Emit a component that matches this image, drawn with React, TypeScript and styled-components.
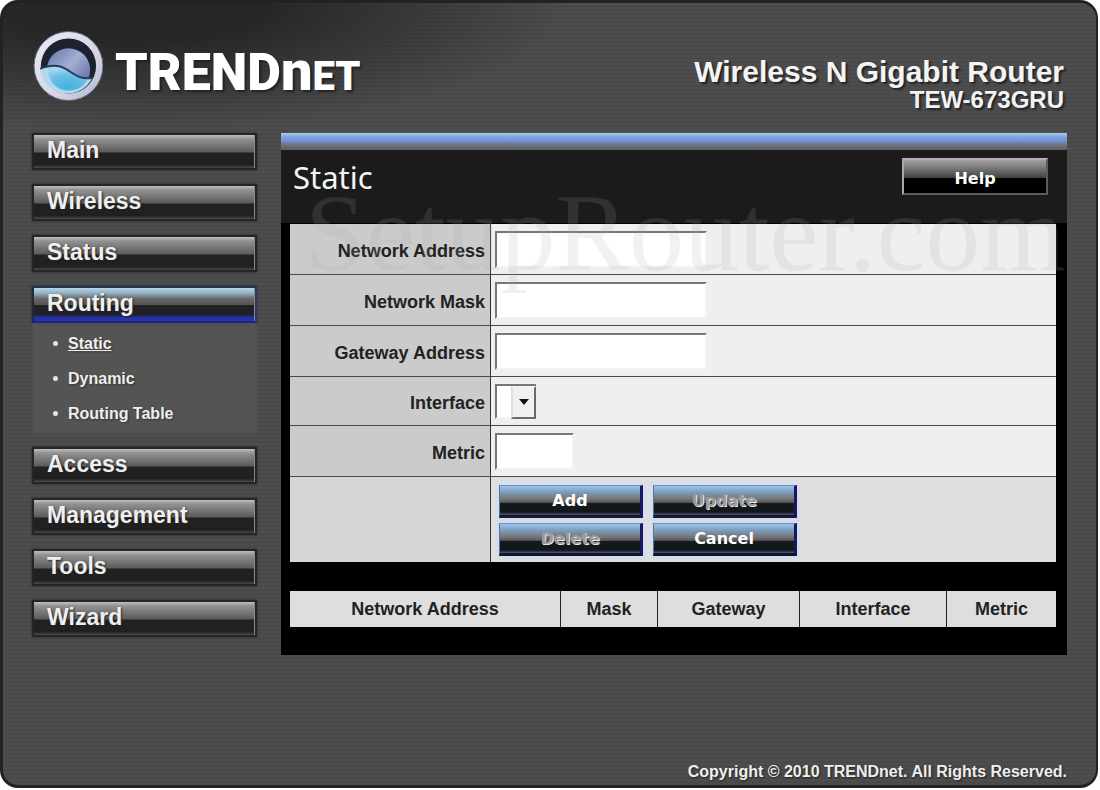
import React from "react";
import styled, { createGlobalStyle, css } from "styled-components";

const GlobalStyle = createGlobalStyle`
  *, *::before, *::after { box-sizing: border-box; }
  body {
    margin: 0;
    background: #fff;
    font-family: "Liberation Sans", Arial, sans-serif;
  }
`;

const Frame = styled.div`
  display: flex;
  flex-direction: column;
  min-height: calc(100vh - 2px);
  margin: 0 2px 2px 0;
  padding: 0 29px 0 29px;
  border: 3px solid #222;
  border-right-width: 2px;
  border-radius: 18px;
  background:
    radial-gradient(ellipse 440px 130px at 130px 0, rgba(26, 26, 26, 0.75) 30%, rgba(26, 26, 26, 0) 100%),
    repeating-linear-gradient(#4e4e4e 0 2px, #494949 2px 4px, #4c4c4c 4px 7px, #474747 7px 8px);
`;

const Header = styled.header`
  display: flex;
  justify-content: space-between;
  align-items: flex-start;
  height: 130px;
  padding-top: 27px;
`;

const Brand = styled.a`
  display: flex;
  align-items: flex-start;
  gap: 12px;
  color: #fff;
  text-decoration: none;
`;

const Wordmark = styled.span`
  padding-top: 15px;
  font: 900 52px/52px Roboto, sans-serif;
  text-shadow: 2px 2px 2px #222;
`;

const WordmarkTail = styled.span`
  font-size: 40px;
`;

const WordmarkArch = styled.span`
  font-size: 56px;
`;

const Product = styled.div`
  padding: 26px 3px 0 0;
  color: #f4f4f4;
  font-weight: bold;
  text-align: right;
  text-shadow: 2px 2px 2px #222;
`;

const ProductName = styled.h1`
  margin: 0;
  font-size: 30px;
  line-height: 32px;
`;

const Model = styled.p`
  margin: 0;
  font-size: 24px;
  line-height: 24px;
`;

const Content = styled.div`
  display: flex;
  align-items: flex-start;
  gap: 24px;
`;

const Nav = styled.nav`
  flex: 0 0 225px;
`;

const MenuList = styled.ul`
  display: flex;
  flex-direction: column;
  gap: 14px;
  margin: 0;
  padding: 0;
  list-style: none;
`;

const MenuLink = styled.a<{ $active?: boolean }>`
  display: block;
  height: 37px;
  padding-left: 13px;
  border: 2px solid #252525;
  background: linear-gradient(#c0c0c0 0, #929292 12%, #5a5a5a 52%, #222 54%, #202020 90%, #4a4a4a 100%);
  box-shadow: inset -1px 0 0 #888, 0 0 2px #222;
  color: #efefef;
  font-size: 23px;
  font-weight: bold;
  line-height: 31px;
  text-decoration: none;
  text-shadow: 1px 1px 2px #222;
  ${(p) =>
    p.$active &&
    css`
      border-color: #23344a #2b3a66 #1d2484 #252a38;
      background: linear-gradient(#b4d8ea 0, #8fa9ba 18%, #686868 32%, #555 50%, #222 52%, #202028 80%, #2730a8 90%, #2a34a0 100%);
    `}
`;

const SubList = styled.ul`
  margin: 0;
  padding: 3px 2px 2px;
  background: #545454;
  box-shadow: inset 0 0 3px #4a4a4a;
  list-style: none;
`;

const SubItem = styled.li`
  display: flex;
  align-items: center;
  gap: 10px;
  height: 35px;
  padding-left: 19px;
  color: #eee;
  font-size: 16px;
  font-weight: bold;
  text-shadow: 1px 1px 2px #333;

  &::before {
    content: "";
    width: 5px;
    height: 5px;
    border-radius: 50%;
    background: #e4e4e4;
  }
`;

const SubLink = styled.a<{ $current?: boolean }>`
  color: inherit;
  text-decoration: ${(p) => (p.$current ? "underline" : "none")};
`;

const Panel = styled.main`
  position: relative;
  flex: 1;
  min-width: 0;
  padding-bottom: 28px;
  background: #000;
`;

const PanelStripe = styled.div`
  height: 17px;
  background: linear-gradient(#a9cdea 0, #7fa0da 25%, #7694dc 45%, #6d7f9c 60%, #6a6d70 80%, #606060 100%);
`;

const PanelHeader = styled.div`
  display: flex;
  justify-content: space-between;
  align-items: flex-start;
  height: 73px;
  padding: 8px 19px 0 12px;
  background: #1b1b1b;
`;

const PanelTitle = styled.h2`
  margin: 0;
  color: #f4f4f4;
  font: 400 31px/38px "Noto Sans", sans-serif;
`;

const buttonText = css`
  color: #fff;
  font: bold 16px/20px "DejaVu Sans", Verdana, sans-serif;
  text-align: center;
`;

const HelpButton = styled.button`
  ${buttonText}
  width: 146px;
  height: 37px;
  padding: 4px 0 0;
  border: 2px solid;
  border-color: #b8adb8 #5c5c5c #5c5c5c #a9a9a9;
  background: linear-gradient(#a79ea7 0, #777 25%, #444 53%, #000 55%, #000 100%);
`;

const ActionButton = styled.button`
  ${buttonText}
  width: 144px;
  height: 33px;
  padding: 0;
  border-style: solid;
  border-width: 1px 3px 3px 1px;
  border-color: #6c93bb #1a1660 #14142c #51759c;
  background: linear-gradient(#9cc4ea 0, #7d9cba 22%, #716f70 48%, #504b4a 58%, #151a1e 60%, #12171b 90%, #4e5a76 100%);
  box-shadow: 0 0 4px 2px #cfdcf4;

  &:disabled {
    color: #9a9a9a;
    text-shadow: 1px 1px 0 #e8e8e8;
  }
`;

const FormTable = styled.table`
  width: calc(100% - 20px);
  margin: 1px 11px 29px 9px;
  border-spacing: 0;
  background: #efefef;
`;

const FormRow = styled.tr<{ $height: number }>`
  height: ${(p) => p.$height}px;
`;

const LabelCell = styled.th<{ $plain?: boolean }>`
  width: 201px;
  padding: 4px 5px 0 0;
  border-right: 1px solid #333;
  border-bottom: ${(p) => (p.$plain ? "0" : "1px solid #4a4a4a")};
  background: ${(p) => (p.$plain ? "#d6d6d6" : "#cbcbcb")};
  color: #222;
  font-size: 18px;
  line-height: 20px;
  text-align: right;
`;

const FieldCell = styled.td<{ $plain?: boolean }>`
  padding: ${(p) => (p.$plain ? "8px 8px 6px" : "0 4px")};
  border-bottom: ${(p) => (p.$plain ? "0" : "1px solid #4a4a4a")};
  background: ${(p) => (p.$plain ? "#dfdfdf" : "#efefef")};
  vertical-align: ${(p) => (p.$plain ? "top" : "middle")};
`;

const TextInput = styled.input<{ $short?: boolean }>`
  display: block;
  width: ${(p) => (p.$short ? 79 : 212)}px;
  height: 37px;
  padding: 0 6px;
  border: 2px solid;
  border-color: #777 #f2f2f2 #f2f2f2 #777;
  background: #fff;
  font: 18px "Liberation Sans", Arial, sans-serif;
`;

const SelectWrap = styled.div`
  display: grid;
  grid-template-columns: 16px 25px;
  width: 41px;
  height: 35px;

  & > * {
    grid-row: 1;
  }
`;

const Select = styled.select`
  grid-column: 1 / 3;
  border: 2px solid;
  border-color: #777 #888 #f2f2f2 #777;
  border-radius: 0;
  background: #fff;
  appearance: none;
`;

const SelectArrow = styled.span`
  grid-column: 2;
  display: flex;
  align-items: center;
  justify-content: center;
  margin-top: 2px;
  border: 2px solid;
  border-color: #f4f4f4 #6a6a6a #6a6a6a #ddd;
  background: #f1f1f1;
  pointer-events: none;
  z-index: 1;

  &::before {
    content: "";
    border: 5px solid transparent;
    border-top: 6px solid #111;
    border-bottom: 0;
  }
`;

const Actions = styled.div`
  display: grid;
  grid-template-columns: 144px 144px;
  gap: 5px 10px;
`;

const RouteTable = styled.table`
  width: calc(100% - 20px);
  margin: 0 11px 0 9px;
  border-spacing: 0;
  table-layout: fixed;
`;

const RouteHead = styled.th<{ $width?: number }>`
  width: ${(p) => (p.$width ? `${p.$width}px` : "auto")};
  height: 36px;
  padding: 0;
  border-right: 1px solid #222;
  background: #dedede;
  color: #222;
  font-size: 18px;
  line-height: 20px;

  &:last-child {
    border-right: 0;
  }
`;

const Watermark = styled.div`
  position: absolute;
  top: 40px;
  right: 0;
  left: 24px;
  color: rgba(170, 170, 170, 0.16);
  font: 110px/120px "Liberation Serif", "Times New Roman", serif;
  white-space: nowrap;
  pointer-events: none;
`;

const Footer = styled.footer`
  margin-top: auto;
  padding-bottom: 3px;
  color: #eee;
  font-size: 16px;
  font-weight: bold;
  line-height: 20px;
  text-align: right;
  text-shadow: 1px 1px 2px #222;
`;

function Logo() {
  return (
    <svg width="71" height="72" viewBox="0 0 72 72" aria-hidden="true">
      <defs>
        <linearGradient id="ring" x1="0" y1="0" x2="1" y2="1">
          <stop offset="0" stopColor="#eceaf4" />
          <stop offset="0.6" stopColor="#d6d6e6" />
          <stop offset="1" stopColor="#b0b6d0" />
        </linearGradient>
        <linearGradient id="globe" x1="0" y1="0" x2="1" y2="1">
          <stop offset="0" stopColor="#5f74a6" />
          <stop offset="0.45" stopColor="#a5aed4" />
          <stop offset="1" stopColor="#4b5c92" />
        </linearGradient>
        <radialGradient id="sea" cx="0.5" cy="0.85" r="0.8">
          <stop offset="0" stopColor="#3fb3dc" />
          <stop offset="0.6" stopColor="#6bbfe6" />
          <stop offset="1" stopColor="#a9d6ee" />
        </radialGradient>
        <clipPath id="inside">
          <circle cx="36" cy="36" r="28" />
        </clipPath>
      </defs>
      <circle cx="37" cy="36" r="35" fill="url(#ring)" stroke="#5d6278" />
      <circle cx="37" cy="36" r="28" fill="#1c222e" />
      <g clipPath="url(#inside)">
        <circle cx="37" cy="40" r="22" fill="url(#globe)" />
        <path d="M7 39C18 35 27 34 36 40S50 50 62 48L64 66H7Z" fill="#b5d8ee" />
        <path d="M15 38C24 35 30 36 36 40S48 50 57 49C53 57 46 61 37 61C25 61 17 52 15 38Z" fill="url(#sea)" />
        <path d="M7 39C18 35 27 34 36 40S50 50 62 48" fill="none" stroke="#25385f" strokeWidth="2" />
      </g>
    </svg>
  );
}

const menu = ["Main", "Wireless", "Status", "Routing", "Access", "Management", "Tools", "Wizard"];
const routingPages = ["Static", "Dynamic", "Routing Table"];

export default function App() {
  return (
    <>
      <GlobalStyle />
      <Frame>
        <Header>
          <Brand href="#home">
            <Logo />
            <Wordmark>
              TREND
              <WordmarkArch>n</WordmarkArch>
              <WordmarkTail>ET</WordmarkTail>
            </Wordmark>
          </Brand>
          <Product>
            <ProductName>Wireless N Gigabit Router</ProductName>
            <Model>TEW-673GRU</Model>
          </Product>
        </Header>
        <Content>
          <Nav>
            <MenuList>
              {menu.map((name) => (
                <li key={name}>
                  <MenuLink href={`#${name.toLowerCase()}`} $active={name === "Routing"}>
                    {name}
                  </MenuLink>
                  {name === "Routing" && (
                    <SubList>
                      {routingPages.map((page) => (
                        <SubItem key={page}>
                          <SubLink href="#routing" $current={page === "Static"}>
                            {page}
                          </SubLink>
                        </SubItem>
                      ))}
                    </SubList>
                  )}
                </li>
              ))}
            </MenuList>
          </Nav>
          <Panel>
            <PanelStripe />
            <PanelHeader>
              <PanelTitle>Static</PanelTitle>
              <HelpButton type="button">Help</HelpButton>
            </PanelHeader>
            <FormTable>
              <tbody>
                <FormRow $height={51}>
                  <LabelCell scope="row"><label htmlFor="address">Network Address</label></LabelCell>
                  <FieldCell><TextInput id="address" /></FieldCell>
                </FormRow>
                <FormRow $height={51}>
                  <LabelCell scope="row"><label htmlFor="mask">Network Mask</label></LabelCell>
                  <FieldCell><TextInput id="mask" /></FieldCell>
                </FormRow>
                <FormRow $height={51}>
                  <LabelCell scope="row"><label htmlFor="gateway">Gateway Address</label></LabelCell>
                  <FieldCell><TextInput id="gateway" /></FieldCell>
                </FormRow>
                <FormRow $height={49}>
                  <LabelCell scope="row"><label htmlFor="interface">Interface</label></LabelCell>
                  <FieldCell>
                    <SelectWrap>
                      <Select id="interface" />
                      <SelectArrow />
                    </SelectWrap>
                  </FieldCell>
                </FormRow>
                <FormRow $height={51}>
                  <LabelCell scope="row"><label htmlFor="metric">Metric</label></LabelCell>
                  <FieldCell><TextInput id="metric" $short /></FieldCell>
                </FormRow>
                <FormRow $height={85}>
                  <LabelCell as="td" $plain />
                  <FieldCell $plain>
                    <Actions>
                      <ActionButton type="button">Add</ActionButton>
                      <ActionButton type="button" disabled>Update</ActionButton>
                      <ActionButton type="button" disabled>Delete</ActionButton>
                      <ActionButton type="button">Cancel</ActionButton>
                    </Actions>
                  </FieldCell>
                </FormRow>
              </tbody>
            </FormTable>
            <RouteTable>
              <thead>
                <tr>
                  <RouteHead scope="col">Network Address</RouteHead>
                  <RouteHead scope="col" $width={97}>Mask</RouteHead>
                  <RouteHead scope="col" $width={142}>Gateway</RouteHead>
                  <RouteHead scope="col" $width={147}>Interface</RouteHead>
                  <RouteHead scope="col" $width={109}>Metric</RouteHead>
                </tr>
              </thead>
            </RouteTable>
            <Watermark aria-hidden="true">SetupRouter.com</Watermark>
          </Panel>
        </Content>
        <Footer>Copyright © 2010 TRENDnet. All Rights Reserved.</Footer>
      </Frame>
    </>
  );
}
